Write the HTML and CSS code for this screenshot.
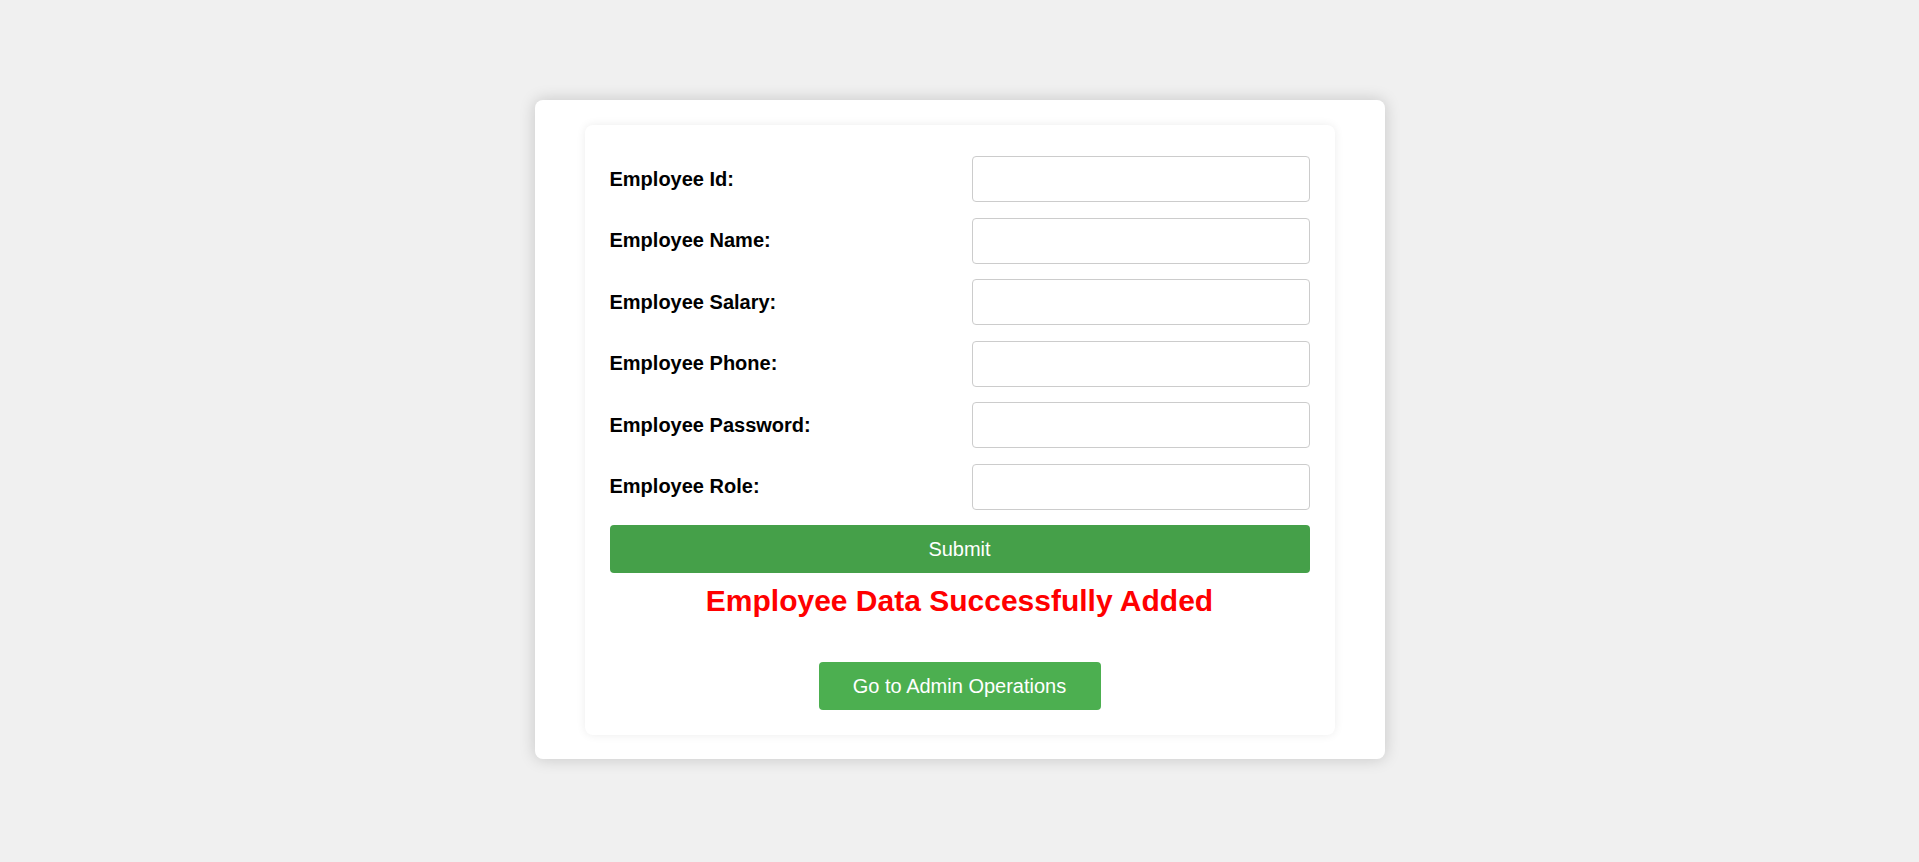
FILE: index.html
```html
<!DOCTYPE html>
<html lang="en">
<head>
<meta charset="utf-8">
<title>Add Employee</title>
<link rel="stylesheet" href="styles.css">
</head>
<body>
<div class="outer">
  <div class="card">
    <form class="form">
      <div class="row"><label class="label">Employee Id:</label><input class="field" type="text"></div>
      <div class="row"><label class="label">Employee Name:</label><input class="field" type="text"></div>
      <div class="row"><label class="label">Employee Salary:</label><input class="field" type="text"></div>
      <div class="row"><label class="label">Employee Phone:</label><input class="field" type="text"></div>
      <div class="row"><label class="label">Employee Password:</label><input class="field" type="password"></div>
      <div class="row"><label class="label">Employee Role:</label><input class="field" type="text"></div>
      <button class="submit" type="button">Submit</button>
    </form>
    <h2 class="message">Employee Data Successfully Added</h2>
    <div class="actions"><button class="admin" type="button">Go to Admin Operations</button></div>
  </div>
</div>
</body>
</html>
```

FILE: styles.css
```css
html, body {
  margin: 0;
  padding: 0;
}
body {
  background: #f0f0f0;
  font-family: "Liberation Sans", Arial, sans-serif;
  height: 862px;
  box-sizing: border-box;
  padding-top: 100px;
  display: flex;
  align-items: flex-start;
  justify-content: center;
}
.outer {
  width: 850px;
  box-sizing: border-box;
  padding: 25px 50px 24px;
  background: #fff;
  border-radius: 8px;
  box-shadow: 0 0 16px rgba(0, 0, 0, 0.18);
}
.card {
  background: #fff;
  border-radius: 8px;
  box-shadow: 0 0 10px rgba(0, 0, 0, 0.08);
  padding: 31px 25px 25px;
}
.form {
  display: flex;
  flex-direction: column;
  gap: 15.5px;
  margin: 0;
}
.row {
  display: flex;
  align-items: center;
  height: 46px;
}
.label {
  flex: 1;
  font-size: 20px;
  font-weight: bold;
  color: #000;
}
.field {
  width: 338px;
  height: 46px;
  box-sizing: border-box;
  border: 1px solid #cccccc;
  border-radius: 4px;
  padding: 10px;
  font-size: 18px;
  font-family: inherit;
  background: #fff;
  outline: none;
}
.submit {
  height: 48px;
  border: 0;
  border-radius: 4px;
  background: #45a049;
  color: #fff;
  font-family: inherit;
  font-size: 20px;
  line-height: 24px;
  padding: 12px;
}
.message {
  margin: 11px 0 0;
  text-align: center;
  color: #ff0000;
  font-size: 30px;
  line-height: 34px;
  font-weight: bold;
}
.actions {
  display: flex;
  justify-content: center;
  margin-top: 44px;
}
.admin {
  width: 282px;
  height: 48px;
  border: 0;
  border-radius: 4px;
  background: #4caf50;
  color: #fff;
  font-family: inherit;
  font-size: 20px;
  line-height: 24px;
  padding: 12px 0;
}
```
